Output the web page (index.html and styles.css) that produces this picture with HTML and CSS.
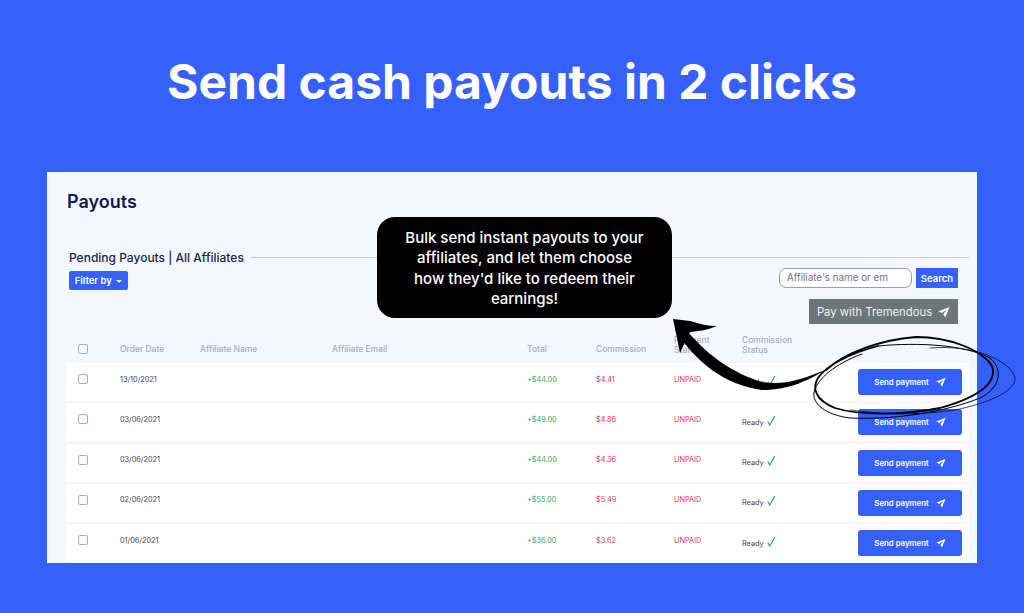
FILE: index.html
```html
<!DOCTYPE html>
<html lang="en">
<head>
    <meta charset="UTF-8">
    <title>Send cash payouts in 2 clicks</title>
    <link rel="stylesheet" href="styles.css">
</head>
<body>
    <svg class="defs" width="0" height="0">
        <symbol id="plane" viewBox="0 0 24 24"><path d="M23 2 1 10.5l6.5 3.6L18 6.5 10.5 16.5 14.5 23Z"/></symbol>
        <symbol id="check" viewBox="0 0 10 12"><path d="M1 7.5 3.2 11 8.8 1" fill="none" stroke="#12a36a" stroke-width="1.2"/></symbol>
    </svg>
    <div class="page">
        <h1>Send cash payouts in 2 clicks</h1>
        <div class="panel">
            <h2>Payouts</h2>
            <div class="section-title">
                <span>Pending Payouts | All Affiliates</span>
                <div class="rule"></div>
            </div>
            <div class="toolbar">
                <button class="filter-btn">Filter by <span class="caret"></span></button>
                <div class="tools-right">
                    <div class="search-row">
                        <div class="search-input">Affiliate's name or em</div>
                        <button class="search-btn">Search</button>
                    </div>
                    <button class="pay-btn">Pay with Tremendous <svg class="icon"><use href="#plane"/></svg></button>
                </div>
            </div>
            <div class="row head">
                <span class="box"></span>
                <span>Order Date</span>
                <span>Affiliate Name</span>
                <span>Affiliate Email</span>
                <span>Total</span>
                <span>Commission</span>
                <span class="two-line">Payment<br>Status</span>
                <span class="two-line">Commission<br>Status</span>
                <span></span>
            </div>
            <div class="row item">
                <span class="box"></span><span>13/10/2021</span><span></span><span></span>
                <span class="total">+$44.00</span><span class="comm">$4.41</span><span class="comm">UNPAID</span>
                <span class="ready">Ready <svg class="tick"><use href="#check"/></svg></span>
                <button class="send-btn">Send payment <svg class="icon"><use href="#plane"/></svg></button>
            </div>
            <div class="row item">
                <span class="box"></span><span>03/06/2021</span><span></span><span></span>
                <span class="total">+$49.00</span><span class="comm">$4.86</span><span class="comm">UNPAID</span>
                <span class="ready">Ready <svg class="tick"><use href="#check"/></svg></span>
                <button class="send-btn">Send payment <svg class="icon"><use href="#plane"/></svg></button>
            </div>
            <div class="row item">
                <span class="box"></span><span>03/06/2021</span><span></span><span></span>
                <span class="total">+$44.00</span><span class="comm">$4.36</span><span class="comm">UNPAID</span>
                <span class="ready">Ready <svg class="tick"><use href="#check"/></svg></span>
                <button class="send-btn">Send payment <svg class="icon"><use href="#plane"/></svg></button>
            </div>
            <div class="row item">
                <span class="box"></span><span>02/06/2021</span><span></span><span></span>
                <span class="total">+$55.00</span><span class="comm">$5.49</span><span class="comm">UNPAID</span>
                <span class="ready">Ready <svg class="tick"><use href="#check"/></svg></span>
                <button class="send-btn">Send payment <svg class="icon"><use href="#plane"/></svg></button>
            </div>
            <div class="row item">
                <span class="box"></span><span>01/06/2021</span><span></span><span></span>
                <span class="total">+$36.00</span><span class="comm">$3.62</span><span class="comm">UNPAID</span>
                <span class="ready">Ready <svg class="tick"><use href="#check"/></svg></span>
                <button class="send-btn">Send payment <svg class="icon"><use href="#plane"/></svg></button>
            </div>
        </div>
        <div class="callout">Bulk send instant payouts to your affiliates, and let them choose how they'd like to redeem their earnings!</div>
        <svg class="scribble" viewBox="0 0 1024 613" width="1024" height="613">
            <g fill="none" stroke="#000" stroke-linecap="round" stroke-linejoin="round">
                <path d="M826 370C846 352 880 340 916 337 950 337 982 350 992 366 998 384 976 398 940 408 905 415 860 416 835 408 815 400 812 388 818 378 826 366 848 354 878 346" stroke-width="1.8"/>
                <path d="M878 346C920 342 965 345 990 358 1004 370 1000 388 980 398 945 412 895 420 850 418 826 415 812 404 814 392 818 378 835 364 862 354" stroke-width="1"/>
                <path d="M930 348C975 344 1012 362 1015 378 1016 392 985 404 955 410 915 416 880 414 850 410" stroke-width="0.7"/>
            </g>
            <path d="M679 321C698 346 725 371 762 382 785 386 806 378 827 369 809 380 790 390 762 390 724 385 696 362 675 330Z" fill="#000"/>
            <path d="M673 319 690 321C700 324 708 326 717 326 708 330 699 331 690 332L686 340 680 353 677 338Z" fill="#000"/>
        </svg>
    </div>
</body>
</html>
```

FILE: styles.css
```css
* {
    box-sizing: border-box;
}
body {
    margin: 0;
    font-family: Inter, "Liberation Sans", sans-serif;
    background: #3660fc;
}
.defs {
    display: block;
    height: 0;
}
.page {
    position: relative;
    width: 1024px;
    height: 613px;
    overflow: hidden;
}
h1 {
    margin: 0;
    height: 172px;
    padding-top: 54px;
    font-size: 48px;
    line-height: 56px;
    font-weight: 700;
    color: #fff;
    text-align: center;
}
.panel {
    width: 930px;
    height: 391px;
    margin-left: 47px;
    padding: 0 8px 0 20px;
    background: #f5f7ff;
    overflow: hidden;
}
h2 {
    margin: 0;
    padding-top: 20px;
    height: 70px;
    font-size: 18px;
    line-height: 20px;
    font-weight: 600;
    color: #0e1a4f;
}
.section-title {
    display: flex;
    align-items: center;
    gap: 6px;
    height: 30px;
    padding: 0 0 0 2px;
    font-size: 12px;
    font-weight: 500;
    color: #15244f;
}
.rule {
    flex: 1;
    height: 1px;
    background: #c4c8d2;
}
.toolbar {
    display: flex;
    justify-content: space-between;
    height: 64px;
    padding: 0 11px 0 2px;
    margin-top: -1px;
}
button {
    border: none;
    font-family: inherit;
    color: #fff;
}
.filter-btn {
    width: 59px;
    height: 19px;
    padding: 0;
    border-radius: 2px;
    background: #3660fc;
    font-size: 9.5px;
    font-weight: 600;
}
.caret {
    display: inline-block;
    margin-left: 2px;
    vertical-align: middle;
    border: 3px solid transparent;
    border-top-color: #fff;
    border-bottom: none;
}
.tools-right {
    display: flex;
    flex-direction: column;
    align-items: flex-end;
    gap: 11px;
    margin-top: -3px;
}
.search-row {
    display: flex;
    gap: 4px;
}
.search-input {
    width: 133px;
    height: 20px;
    padding-left: 7px;
    border: 1px solid #9a9eaa;
    border-radius: 7px;
    background: #fff;
    font-size: 9.8px;
    line-height: 18px;
    color: #70747e;
}
.search-btn {
    width: 42px;
    height: 20px;
    padding: 0;
    background: #3660fc;
    font-size: 9.5px;
    font-weight: 600;
}
.pay-btn {
    display: flex;
    align-items: center;
    justify-content: center;
    gap: 6px;
    width: 149px;
    height: 25px;
    padding: 0;
    border-radius: 1px;
    background: #6c7579;
    font-size: 11.3px;
    color: #eef0f2;
}
.pay-btn .icon {
    width: 12px;
    height: 12px;
}
.icon {
    fill: #fff;
}
.row {
    display: grid;
    grid-template-columns: 42px 80px 132px 195px 69px 78px 68px 116px 104px;
    align-items: center;
    padding-left: 11px;
}
.head {
    height: 28px;
    padding-bottom: 4px;
    font-size: 8.5px;
    line-height: 10px;
    font-weight: 500;
    color: #a6abba;
}
.two-line {
    margin-bottom: 8px;
}
.item {
    height: 38px;
    margin-bottom: 2.3px;
    padding-bottom: 6px;
    background: #fff;
    font-size: 7.3px;
    color: #3b4152;
}
.box {
    width: 10px;
    height: 10px;
    border: 1px solid #a9adb9;
    border-radius: 2px;
    background: #f8f9fd;
}
.total {
    color: #3fa351;
}
.comm {
    color: #cf3a52;
}
.ready {
    display: flex;
    align-items: flex-end;
    gap: 3px;
    padding-top: 3px;
}
.tick {
    width: 9px;
    height: 11px;
    margin-bottom: 1px;
}
.send-btn {
    display: flex;
    align-items: center;
    justify-content: center;
    gap: 7px;
    height: 26px;
    margin-bottom: -6px;
    padding: 0;
    border-radius: 3px;
    background: #3660fc;
    font-size: 7.8px;
    font-weight: 600;
}
.send-btn .icon {
    width: 10px;
    height: 10px;
}
.callout {
    position: absolute;
    left: 377px;
    top: 217px;
    width: 295px;
    height: 101px;
    padding: 11px 24px;
    border-radius: 18px;
    background: #000;
    color: #fff;
    font-size: 15px;
    line-height: 20.4px;
    font-weight: 500;
    text-align: center;
}
.scribble {
    position: absolute;
    left: 0;
    top: 0;
    pointer-events: none;
}
```
